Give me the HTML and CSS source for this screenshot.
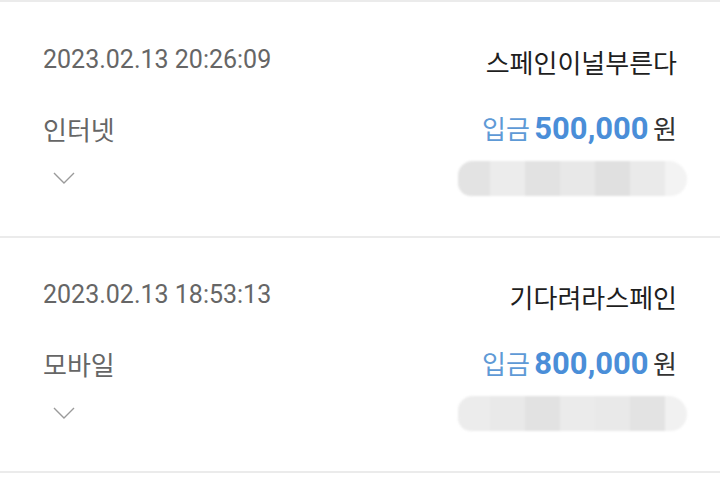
FILE: index.html
```html
<!DOCTYPE html>
<html lang="ko">
<head>
  <meta charset="UTF-8" />
  <meta name="viewport" content="width=device-width, initial-scale=1" />
  <title>입금 내역</title>
  <link rel="stylesheet" href="styles.css">
</head>
<body>
  <ul class="list">
    <li class="item">
      <div class="row row-top">
        <span class="date">2023.02.13 20:26:09</span>
        <span class="name">스페인이널부른다</span>
      </div>
      <div class="row row-mid">
        <span class="method">인터넷</span>
        <span class="amount"><span class="label">입금</span> <b class="value">500,000</b> <span class="unit">원</span></span>
      </div>
      <div class="row row-bottom">
        <svg class="chevron" width="22" height="12" viewBox="0 0 22 12"><path d="M1 1 L11 11 L21 1" fill="none" stroke="#9a9a9a" stroke-width="1.4"/></svg>
        <div class="masked">
          <i class="m1"></i><i class="m2"></i><i class="m3"></i><i class="m4"></i><i class="m5"></i><i class="m6"></i><i class="m7"></i>
        </div>
      </div>
    </li>
    <li class="item">
      <div class="row row-top">
        <span class="date">2023.02.13 18:53:13</span>
        <span class="name">기다려라스페인</span>
      </div>
      <div class="row row-mid">
        <span class="method">모바일</span>
        <span class="amount"><span class="label">입금</span> <b class="value">800,000</b> <span class="unit">원</span></span>
      </div>
      <div class="row row-bottom">
        <svg class="chevron" width="22" height="12" viewBox="0 0 22 12"><path d="M1 1 L11 11 L21 1" fill="none" stroke="#9a9a9a" stroke-width="1.4"/></svg>
        <div class="masked masked-2">
          <i class="m1"></i><i class="m2"></i><i class="m3"></i><i class="m4"></i><i class="m5"></i><i class="m6"></i><i class="m7"></i>
        </div>
      </div>
    </li>
  </ul>
</body>
</html>
```

FILE: styles.css
```css
body {
  margin: 0;
  background: #fff;
  font-family: Roboto, "Noto Sans CJK KR", sans-serif;
  color: #333;
}
.list {
  list-style: none;
  margin: 0;
  padding: 0;
  border-top: 2px solid #ebebeb;
}
.item {
  height: 235px;
  box-sizing: border-box;
  padding: 35px 43px 0 43px;
  border-bottom: 2px solid #ebebeb;
}
.item:first-child {
  height: 236px;
  padding-top: 36px;
}
.row {
  display: flex;
  justify-content: space-between;
  align-items: center;
  height: 42px;
}
.row-mid {
  margin-top: 27px;
}
.row-bottom {
  margin-top: 9px;
  height: 40px;
}
.date {
  font-size: 25px;
  color: #666;
}
.name {
  font-size: 26px;
  color: #1e1e1e;
  margin-top: 5px;
}
.method {
  font-size: 26px;
  color: #666;
}
.amount {
  font-size: 26px;
  white-space: pre;
  word-spacing: -2px;
}
.label {
  color: #5e9ad6;
}
.value {
  font-size: 31px;
  font-weight: bold;
  color: #4a8ed8;
}
.unit {
  color: #333;
}
.chevron {
  margin-left: 10px;
}
.masked {
  display: flex;
  width: 229px;
  height: 35px;
  margin-right: -10px;
  border-radius: 16px 20px 18px 14px;
  overflow: hidden;
  filter: blur(1.2px);
}
.masked i {
  flex: 1;
}
.masked .m1 { flex: 0 0 32px; background: #e3e3e3; }
.masked .m2 { background: #ececec; }
.masked .m3 { background: #e2e2e2; }
.masked .m4 { background: #e8e8e8; }
.masked .m5 { background: #e0e0e0; }
.masked .m6 { background: #eaeaea; }
.masked .m7 { flex: 0 0 22px; background: #f3f3f3; }
.masked-2 .m1 { background: #ececec; }
.masked-2 .m2 { background: #e9e9e9; }
.masked-2 .m3 { background: #e2e2e2; }
.masked-2 .m4 { background: #ebebeb; }
.masked-2 .m5 { background: #e9e9e9; }
.masked-2 .m6 { background: #e3e3e3; }
.masked-2 .m7 { background: #f1f1f1; }
```
